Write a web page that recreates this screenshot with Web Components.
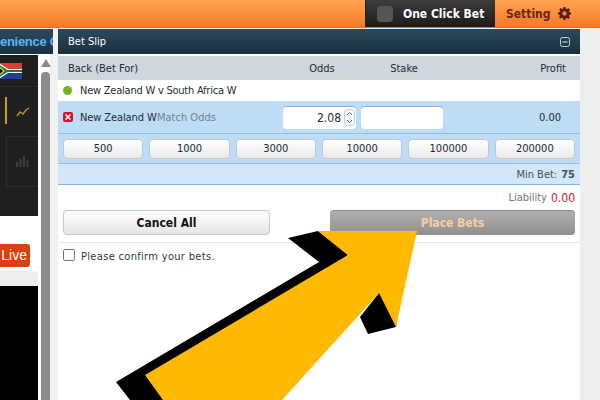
<!DOCTYPE html>
<html>
<head>
<meta charset="utf-8">
<style>
  html, body { margin: 0; height: 400px; overflow: hidden; background: #eeeeee; }
  body { font-family: "DejaVu Sans", Arial, sans-serif; font-stretch: condensed; font-size: 11px; color: #1e2b36; }
  #page { display: flex; flex-direction: column; width: 600px; height: 400px; position: relative; overflow: hidden; }
  #main { display: flex; flex: 1; min-height: 0; }
</style>
</head>
<body>
<div id="page">
  <top-bar></top-bar>
  <div id="main">
    <side-panel></side-panel>
    <bet-slip></bet-slip>
  </div>
  <big-arrow></big-arrow>
</div>

<script>
class TopBar extends HTMLElement {
  constructor() {
    super();
    this.attachShadow({ mode: 'open' });
    this.shadowRoot.innerHTML = `
      <style>
        :host {
          display: flex;
          justify-content: flex-end;
          box-sizing: content-box;
          height: 27px;
          margin-bottom: 1px;
          background: linear-gradient(#ffa352, #f47a26);
          border-bottom: 1px solid #e8701e;
          font-family: "DejaVu Sans", sans-serif;
          font-stretch: condensed;
        }
        .one {
          display: flex;
          align-items: center;
          width: 130px;
          padding-left: 11px;
          box-sizing: border-box;
          background: linear-gradient(#3c3c3c, #1c1c1c);
          border-left: 1px solid #222;
          color: #fff;
          font-weight: bold;
          font-size: 12px;
        }
        .one i {
          width: 16px;
          height: 16px;
          border-radius: 4px;
          background: #555;
          margin-right: 10px;
          flex: none;
        }
        .set {
          display: flex;
          align-items: center;
          width: 105px;
          padding-left: 11px;
          box-sizing: border-box;
          color: #6b2506;
          font-weight: bold;
          font-size: 12px;
        }
        svg { margin-left: 7px; }
      </style>
      <div class="one"><i></i><span>One Click Bet</span></div>
      <div class="set">Setting
        <svg width="13" height="13" viewBox="0 0 24 24"><path fill="#5c1f05" fill-rule="evenodd" d="M10 0h4l.7 3.200 1.900.8 2.800-1.800 2.800 2.800-1.800 2.800.8 1.900L24 10v4l-3.200.7-.8 1.900 1.800 2.800-2.800 2.800-2.800-1.800-1.900.8L14 24h-4l-.7-3.200-1.900-.8-2.800 1.800-2.800-2.800 1.800-2.800-.8-1.900L0 14v-4l3.200-.7.8-1.900L2.200 4.600 5 1.800 7.800 3.600l1.900-.4zM12 8a4 4 0 1 0 0 8 4 4 0 0 0 0-8z"/></svg>
      </div>
    `;
  }
}

class SidePanel extends HTMLElement {
  constructor() {
    super();
    this.attachShadow({ mode: 'open' });
    this.shadowRoot.innerHTML = `
      <style>
        :host {
          display: flex;
          flex-direction: column;
          width: 58px;
          flex: none;
          background: #f1f1f1;
          overflow: hidden;
        }
        .title {
          width: 53px;
          height: 25px;
          flex: none;
          overflow: hidden;
          white-space: nowrap;
          background: linear-gradient(#2b495c, #1b3140);
          color: #5cb6f2;
          font: bold 13px/25px "Liberation Sans", sans-serif;
          letter-spacing: -.3px;
        }
        .body { display: flex; flex: 1; min-height: 0; }
        .col { width: 38px; display: flex; flex-direction: column; flex: none; overflow: hidden; background: #fff; }
        .dark {
          height: 161px;
          margin-top: 1px;
          flex: none;
          background: #1f1f1f;
          display: flex;
          flex-direction: column;
        }
        .flag { height: 32px; padding-top: 8px; box-sizing: border-box; border-bottom: 1px solid #2d2d2d; flex: none; }
        .flag svg { display: block; margin-left: -1px; }
        .trend { display: flex; align-items: center; height: 49px; flex: none; padding-left: 5px; gap: 9px; }
        .trend b { display: block; width: 2px; height: 27px; background: #c69a1f; margin-top: -3px; }
        .bars {
          margin: 0 0 0 6px;
          height: 51px;
          display: flex;
          align-items: center;
          justify-content: center;
          border: 1px solid #2d2d2d;
          border-right: 0;
          box-sizing: border-box;
        }
        .live-row { display: flex; justify-content: flex-end; padding: 28px 8px 4px 0; background: #fff; }
        .live {
          background: #d9400a;
          color: #fff;
          border-radius: 0 3px 3px 0;
          height: 23px;
          font: 14px/23px "Liberation Sans", sans-serif;
          padding: 0 3px 0 2px;
        }
        .strip { height: 15px; background: #eeeeee; flex: none; }
        .video { flex: 1; background: #000; }
        .bar { width: 12px; flex: none; background: #fff; position: relative; display: flex; flex-direction: column; align-items: center; }
        .bar svg { margin: 5px 0 5px 3px; flex: none; }
        .thumb { width: 9px; flex: 1; margin-left: 3px; background: #8b8b8b; border-radius: 4px 4px 0 0; }
      </style>
      <div class="title">enience C</div>
      <div class="body">
        <div class="col">
          <div class="dark">
            <div class="flag">
              <svg width="23" height="16" viewBox="0 0 23 16">
                <rect width="23" height="8" fill="#e03c31"/>
                <rect y="8" width="23" height="8" fill="#1f3d99"/>
                <path d="M0 0l9 6h14v4H9l-9 6z" fill="#fff"/>
                <path d="M0 1.500l8.500 5.500H23v2H8.500L0 14.500z" fill="#0a7a4a"/>
                <path d="M0 3l6 5-6 5z" fill="#f5c518"/>
                <path d="M0 4.500l4 3.500-4 3.500z" fill="#000"/>
              </svg>
            </div>
            <div class="trend">
              <b></b>
              <svg width="14" height="10" viewBox="0 0 14 10"><path d="M1 9l3-4 3 2 3-4 3-2" fill="none" stroke="#b89120" stroke-width="1.500"/></svg>
            </div>
            <div class="bars">
              <svg width="13" height="11" viewBox="0 0 13 11" fill="#3d3d3d"><rect y="6" width="2" height="5"/><rect x="3.500" y="3" width="2" height="8"/><rect x="7" y="0" width="2" height="11"/><rect x="10.500" y="4" width="2" height="7"/></svg>
            </div>
          </div>
          <div class="live-row"><div class="live">Live</div></div>
          <div class="strip"></div>
          <div class="video"></div>
        </div>
        <div class="bar">
          <svg width="10" height="8" viewBox="0 0 10 8"><path d="M5 0l5 8H0z" fill="#8b8b8b"/></svg>
          <div class="thumb"></div>
        </div>
      </div>
    `;
  }
}

class StakeBtn extends HTMLElement {
  constructor() {
    super();
    this.attachShadow({ mode: 'open' });
    this.shadowRoot.innerHTML = `
      <style>
        :host {
          display: flex;
          align-items: center;
          justify-content: center;
          flex: 1;
          height: 20px;
          box-sizing: border-box;
          border: 1px solid #c3c9ce;
          border-radius: 4px;
          background: linear-gradient(#ffffff, #e9e9e9);
          color: #1c2a36;
        }
      </style>
      <slot></slot>
    `;
  }
}

class BetSlip extends HTMLElement {
  constructor() {
    super();
    this.attachShadow({ mode: 'open' });
    this.shadowRoot.innerHTML = `
      <style>
        :host {
          display: flex;
          flex-direction: column;
          width: 522px;
          flex: none;
          background: #fff;
          color: #1e2b36;
        }
        .head {
          display: flex;
          align-items: center;
          justify-content: space-between;
          height: 25px;
          flex: none;
          padding: 0 10px;
          background: linear-gradient(#2b495c, #1b3140);
          color: #fff;
        }
        .cols {
          display: grid;
          grid-template-columns: 204px 100px 64px 1fr;
          align-items: center;
          height: 24px;
          margin-top: 2px;
          padding: 0 14px 0 10px;
          flex: none;
          background: #cfd6dd;
          box-sizing: border-box;
        }
        .cols span:nth-child(2), .cols span:nth-child(3) { text-align: center; }
        .cols span:nth-child(4) { text-align: right; }
        .match { display: flex; align-items: center; gap: 8px; height: 21px; padding-left: 5px; flex: none; letter-spacing: -.23px; }
        .dot { width: 9px; height: 9px; border-radius: 50%; background: #6fb51e; }
        .sel {
          display: flex;
          align-items: center;
          height: 33px;
          flex: none;
          padding-left: 5px;
          box-sizing: border-box;
          background: #bedcf5;
          border-bottom: 1px solid #8fc0ea;
        }
        .x {
          width: 10px;
          height: 10px;
          border-radius: 2px;
          background: #d9102e;
          margin-right: 7px;
          display: flex;
          flex: none;
        }
        .name { width: 77px; white-space: nowrap; flex: none; letter-spacing: -.1px; }
        .mkt { width: 126px; color: #76828c; white-space: nowrap; flex: none; }
        .odds {
          width: 73px;
          height: 23px;
          flex: none;
          display: flex;
          align-items: center;
          justify-content: flex-end;
          box-sizing: border-box;
          padding-right: 1px;
          gap: 3px;
          background: #fff;
          border-radius: 4px;
          border-top: 1px solid #9ab;
          font-size: 12px;
        }
        .spin { display: block; }
        .stake { width: 82px; height: 23px; flex: none; margin-left: 5px; background: #fff; border-radius: 4px; border-top: 1px solid #9ab; box-sizing: border-box; }
        .profit { flex: 1; text-align: right; padding-right: 19px; }
        .quick {
          display: flex;
          gap: 6px;
          height: 30px;
          align-items: center;
          padding: 0 5px;
          flex: none;
          box-sizing: border-box;
          background: #bedcf5;
          border-bottom: 1px solid #8fc0ea;
        }
        .min {
          height: 21px;
          display: flex;
          align-items: center;
          justify-content: flex-end;
          padding-right: 5px;
          flex: none;
          box-sizing: border-box;
          background: #d3e7f9;
          border-bottom: 1px solid #7db7e8;
          color: #46525c;
        }
        .min b { margin-left: 4px; }
        .liab { height: 25px; display: flex; align-items: center; justify-content: flex-end; padding-right: 5px; color: #6a747c; gap: 4px; flex: none; }
        .liab b { font-weight: normal; color: #d9102e; font-size: 12px; }
        .acts { display: flex; justify-content: space-between; padding: 0 5px; height: 32px; flex: none; border-bottom: 1px solid #e6e6e6; }
        .btn {
          height: 25px;
          display: flex;
          align-items: center;
          justify-content: center;
          box-sizing: border-box;
          border-radius: 4px;
          font-weight: bold;
          font-size: 12px;
        }
        .cancel { width: 207px; border: 1px solid #c3c9ce; background: linear-gradient(#fff, #e6e6e6); color: #111; }
        .place { width: 245px; background: linear-gradient(#b0b0b0, #8f8f8f); border-top: 1px solid #888; color: #f4cfa4; }
        .conf { display: flex; align-items: center; height: 26px; padding: 0 5px; gap: 6px; color: #2d3a45; letter-spacing: .32px; }
        .conf i { width: 12px; height: 12px; box-sizing: border-box; border: 1px solid #767676; border-radius: 2px; margin-top: -3px; background: #fff; flex: none; }
      </style>
      <div class="head">
        <span>Bet Slip</span>
        <svg width="10" height="10" viewBox="0 0 10 10"><rect x=".5" y=".5" width="9" height="9" rx="2" fill="none" stroke="#c8d2da"/><path d="M2.500 5h5" stroke="#c8d2da" stroke-width="1.200"/></svg>
      </div>
      <div class="cols"><span>Back (Bet For)</span><span>Odds</span><span>Stake</span><span>Profit</span></div>
      <div class="match"><i class="dot"></i><span>New Zealand W v South Africa W</span></div>
      <div class="sel">
        <span class="x"><svg width="10" height="10" viewBox="0 0 10 10"><path d="M2.500 2.500l5 5m0-5l-5 5" stroke="#fff" stroke-width="1.500"/></svg></span>
        <span class="name">New Zealand W</span>
        <span class="mkt">Match Odds</span>
        <div class="odds">2.08
          <svg class="spin" width="11" height="17" viewBox="0 0 11 17"><rect x=".5" y=".5" width="10" height="16" rx="3" fill="#f4f7fa" stroke="#c3ccd4"/><path d="M3 6l2.500-2.500L8 6M3 11l2.500 2.500L8 11" fill="none" stroke="#5a6670"/></svg>
        </div>
        <div class="stake"></div>
        <span class="profit">0.00</span>
      </div>
      <div class="quick">
        <stake-btn>500</stake-btn><stake-btn>1000</stake-btn><stake-btn>3000</stake-btn>
        <stake-btn>10000</stake-btn><stake-btn>100000</stake-btn><stake-btn>200000</stake-btn>
      </div>
      <div class="min">Min Bet:<b>75</b></div>
      <div class="liab">Liability <b>0.00</b></div>
      <div class="acts">
        <div class="btn cancel">Cancel All</div>
        <div class="btn place">Place Bets</div>
      </div>
      <div class="conf"><i></i>Please confirm your bets.</div>
    `;
  }
}

class BigArrow extends HTMLElement {
  constructor() {
    super();
    this.attachShadow({ mode: 'open' });
    this.shadowRoot.innerHTML = `
      <style>
        :host { position: absolute; left: 0; top: 0; width: 600px; height: 400px; pointer-events: none; }
        svg { display: block; }
      </style>
      <svg width="600" height="400" viewBox="0 0 600 400">
        <path d="M288 238L318 231L348 255L163 400L130 400L116 382L319 262z" fill="#000"/>
        <path d="M379 293L360 317L368 334L396 327L400 300z" fill="#000"/>
        <path d="M318 231H417L396 327L379 293L282 400H163L145 375L348 255z" fill="#ffb900"/>
      </svg>
    `;
  }
}

customElements.define('top-bar', TopBar);
customElements.define('side-panel', SidePanel);
customElements.define('stake-btn', StakeBtn);
customElements.define('bet-slip', BetSlip);
customElements.define('big-arrow', BigArrow);
</script>
</body>
</html>
